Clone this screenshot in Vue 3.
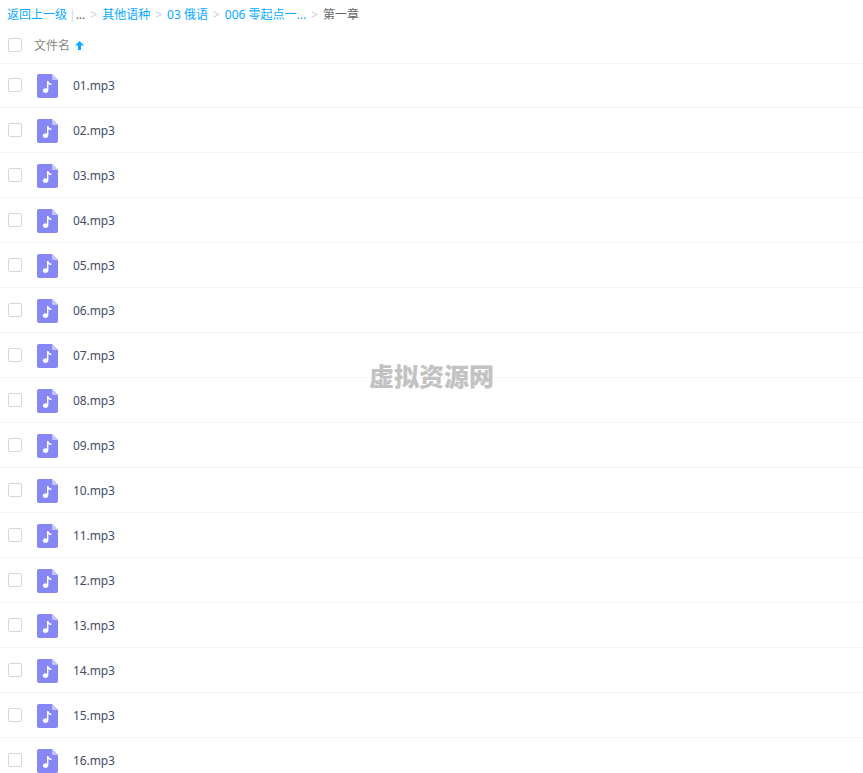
<script setup>
const crumbs = ['其他语种', '03 俄语', '006 零起点一...']
const files = Array.from({ length: 16 }, (_, i) => String(i + 1).padStart(2, '0') + '.mp3')
</script>

<template>
  <div class="page">
    <div class="crumbs">
      <a class="link">返回上一级</a>
      <span class="bar">|</span>
      <span class="dots">...</span>
      <template v-for="c in crumbs" :key="c">
        <span class="sep">&gt;</span>
        <a class="link">{{ c }}</a>
      </template>
      <span class="sep">&gt;</span>
      <span class="current">第一章</span>
    </div>
    <div class="head">
      <span class="check"></span>
      <span class="head-name">文件名</span>
      <svg class="arrow" width="9" height="9" viewBox="0 0 9 9">
        <path d="M4.5 0 L9 4.6 H6 V9 H3 V4.6 H0 Z" fill="#09aaff" />
      </svg>
    </div>
    <div v-for="f in files" :key="f" class="row">
      <span class="check"></span>
      <svg class="file" width="21" height="24" viewBox="0 0 21 24">
        <path d="M2 0 H15 L21 6 V22 A2 2 0 0 1 19 24 H2 A2 2 0 0 1 0 22 V2 A2 2 0 0 1 2 0 Z" fill="#8687f5" />
        <path d="M15 0 L21 6 H16 A1 1 0 0 1 15 5 Z" fill="#c4c4f9" />
        <path d="M10 7 H11.4 C11.6 8.6 12.8 9.3 14.4 9.5 V11 C13.2 11 12.1 10.6 11.4 9.9 V16.2 C11.4 17.8 10 19 8.4 19 C6.9 19 5.8 18 5.8 16.6 C5.8 15.2 7 14.2 8.4 14.2 C9 14.2 9.6 14.4 10 14.7 Z" fill="#fff" />
      </svg>
      <span class="name">{{ f }}</span>
    </div>
    <div class="mark">虚拟资源网</div>
  </div>
</template>

<style>
html, body { margin: 0; background: #fff; overflow: hidden; }
</style>

<style scoped>
.page {
  position: relative;
  width: 863px;
  height: 773px;
  overflow: hidden;
  background: #fff;
  font-family: "Noto Sans", "Noto Sans CJK SC", sans-serif;
  font-size: 12px;
}
.crumbs {
  height: 28px;
  padding-left: 7px;
  display: flex;
  align-items: center;
  white-space: pre;
}
.link { color: #09aaff; }
.bar { color: #c5d8f0; margin: 0 0 0 2px; }
.dots { color: #666; }
.sep { color: #c5d0e0; margin: 0 5px; font-size: 12px; }
.current { color: #666; }
.head {
  height: 36px;
  padding: 0 0 1px 8px;
  display: flex;
  align-items: center;
  border-bottom: 1px solid #f2f4f8;
  box-sizing: border-box;
}
.head-name { color: #888; margin-left: 12px; }
.arrow { margin-left: 5px; }
.check {
  width: 12px;
  height: 12px;
  border: 1px solid #d0d8e4;
  border-radius: 2px;
  flex: none;
}
.row {
  height: 45px;
  padding-left: 8px;
  box-sizing: border-box;
  display: flex;
  align-items: center;
  border-bottom: 1px solid #f2f4f8;
}
.row:nth-child(3) { height: 44px; padding-bottom: 1px; }
.file { margin: 2px 0 0 15px; flex: none; }
.name { margin-left: 15px; color: #424e67; letter-spacing: -0.1px; }
.mark {
  position: absolute;
  left: 369px;
  top: 361px;
  font-size: 25px;
  line-height: 30px;
  font-weight: 900;
  color: #c2c2c2;
  text-shadow: 0 0 2px #fff;
  white-space: nowrap;
}
</style>
